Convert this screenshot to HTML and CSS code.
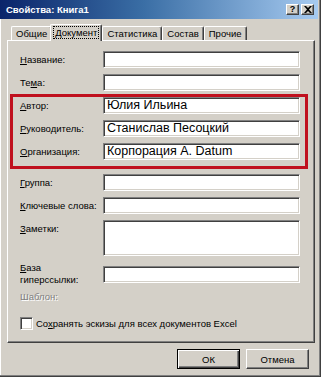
FILE: index.html
```html
<!DOCTYPE html>
<html lang="ru">
<head>
<meta charset="utf-8">
<title>Свойства: Книга1</title>
<link rel="stylesheet" href="styles.css">
</head>
<body>
<div class="window">
  <div class="titlebar">
    <span class="title">Свойства: Книга1</span>
    <div class="tbtns">
      <span class="tbtn">?</span>
      <span class="tbtn"><svg width="8" height="7" viewBox="0 0 8 7"><path d="M0 0h2l2 2 2-2h2L5 3.5 8 7H6L4 5 2 7H0l3-3.5z" fill="#000"/></svg></span>
    </div>
  </div>
  <div class="body">
    <div class="tabs">
      <div class="tab">Общие</div>
      <div class="tab active"><span class="focus">Документ</span></div>
      <div class="tab">Статистика</div>
      <div class="tab">Состав</div>
      <div class="tab">Прочие</div>
    </div>
    <div class="panel">
      <div class="row r1"><span class="lbl"><u>Н</u>азвание:</span><div class="field"></div></div>
      <div class="row"><span class="lbl">Те<u>м</u>а:</span><div class="field"></div></div>
      <div class="row"><span class="lbl"><u>А</u>втор:</span><div class="field">Юлия Ильина</div></div>
      <div class="row"><span class="lbl"><u>Р</u>уководитель:</span><div class="field">Станислав Песоцкий</div></div>
      <div class="row"><span class="lbl"><u>О</u>рганизация:</span><div class="field">Корпорация А. Datum</div></div>
      <div class="row r6"><span class="lbl"><u>Г</u>руппа:</span><div class="field"></div></div>
      <div class="row"><span class="lbl"><u>К</u>лючевые слова:</span><div class="field"></div></div>
      <div class="row tall"><span class="lbl"><u>З</u>аметки:</span><div class="field"></div></div>
      <div class="row two"><span class="lbl"><u>Б</u>аза<br>гиперссылки:</span><div class="field"></div></div>
      <div class="row disabled"><span class="lbl">Шаблон:</span></div>
      <div class="check"><span class="box"></span><span>Со<u>х</u>ранять эскизы для всех документов Excel</span></div>
      <div class="highlight"></div>
    </div>
    <div class="buttons">
      <div class="btn default"><span>ОК</span></div>
      <div class="btn"><span>Отмена</span></div>
    </div>
  </div>
</div>
</body>
</html>
```
FILE: styles.css
```css
* { box-sizing: border-box; }
html, body { margin: 0; padding: 0; }
body {
  width: 321px;
  height: 377px;
  background: #d4d0c8;
  font-family: "Liberation Sans", Arial, sans-serif;
  font-size: 9.5px;
  color: #000;
  overflow: hidden;
}
.window {
  width: 321px;
  height: 377px;
  background: #d4d0c8;
  border-right: 1px solid #404040;
  border-bottom: 1px solid #404040;
  box-shadow: inset -1px -1px 0 #808080, inset 1px 0 0 #fff;
  position: relative;
}
.titlebar {
  height: 19px;
  width: 318px;
  background: linear-gradient(to right, #0a246a 0%, #3a6ea5 45%, #a6caf0 100%);
  display: flex;
  align-items: center;
  justify-content: space-between;
  padding: 0 4px 0 6px;
}
.title {
  color: #fff;
  font-weight: bold;
  font-size: 9.5px;
}
.tbtns { display: flex; gap: 2px; }
.tbtn {
  width: 13px;
  height: 11px;
  background: #d4d0c8;
  border-top: 1px solid #fff;
  border-left: 1px solid #fff;
  border-right: 1px solid #404040;
  border-bottom: 1px solid #404040;
  box-shadow: inset -1px -1px 0 #808080;
  display: flex;
  align-items: center;
  justify-content: center;
  font-weight: bold;
  font-size: 9px;
  line-height: 1;
}
.body { padding: 5px 6px 0 7px; }
.tabs {
  display: flex;
  align-items: flex-end;
  height: 16px;
  padding-left: 4px;
  position: relative;
  z-index: 2;
}
.tab {
  height: 14px;
  padding: 0 4px;
  display: flex;
  align-items: center;
  border-top: 1px solid #fff;
  border-left: 1px solid #fff;
  border-right: 1px solid #404040;
  box-shadow: inset -1px 0 0 #808080;
  border-radius: 2px 2px 0 0;
  background: #d4d0c8;
  white-space: nowrap;
  margin-bottom: 0;
}
.tab.active {
  height: 17px;
  margin: 0 -2px -1px;
  padding: 0 3px 1px;
  position: relative;
  z-index: 3;
}
.focus { outline: 1px dotted #000; outline-offset: 0; padding: 0 1px; line-height: 11px; }
.tab.active + .tab { margin-left: 2px; }
.panel {
  position: relative;
  width: 308px;
  height: 303px;
  border-top: 1px solid #fff;
  border-left: 1px solid #fff;
  border-right: 1px solid #404040;
  border-bottom: 1px solid #404040;
  box-shadow: inset -1px -1px 0 #808080;
  padding: 0 0 0 12px;
}
.row {
  display: flex;
  align-items: center;
  height: 17px;
  margin-top: 6px;
}
.row.r1 { margin-top: 10px; }
.row.r6 { margin-top: 14px; }
.row.tall { height: 36px; align-items: flex-start; }
.row.tall .lbl { margin-top: 3px; }
.row.two { height: 24px; align-items: flex-start; }
.row.two .lbl { line-height: 12px; }
.row.two .field { margin-top: 4px; }
.row.disabled { height: 12px; margin-top: 4px; color: #808080; text-shadow: 1px 1px 0 #fff; }
.lbl { width: 83px; flex: none; white-space: nowrap; }
.field {
  width: 197px;
  height: 100%;
  max-height: 100%;
  background: #fff;
  border-top: 1px solid #808080;
  border-left: 1px solid #808080;
  border-right: 1px solid #fff;
  border-bottom: 1px solid #fff;
  box-shadow: inset 1px 1px 0 #404040, inset -1px -1px 0 #d4d0c8;
  font-size: 12.5px;
  padding: 0 0 0 3px;
  line-height: 14px;
  white-space: nowrap;
}
.row.two .field { height: 17px; }
.check {
  display: flex;
  align-items: center;
  gap: 3px;
  margin-top: 15px;
  height: 13px;
}
.box {
  width: 13px;
  height: 13px;
  background: #fff;
  border-top: 1px solid #808080;
  border-left: 1px solid #808080;
  border-right: 1px solid #fff;
  border-bottom: 1px solid #fff;
  box-shadow: inset 1px 1px 0 #404040, inset -1px -1px 0 #d4d0c8;
}
.highlight {
  position: absolute;
  left: 2px;
  top: 53px;
  width: 298px;
  height: 75px;
  border: 3px solid #c0101e;
  pointer-events: none;
}
.buttons {
  display: flex;
  justify-content: flex-end;
  gap: 6px;
  margin-top: 6px;
  padding-right: 5px;
}
.btn {
  width: 63px;
  height: 20px;
  display: flex;
  align-items: center;
  justify-content: center;
  border-top: 1px solid #fff;
  border-left: 1px solid #fff;
  border-right: 1px solid #404040;
  border-bottom: 1px solid #404040;
  box-shadow: inset -1px -1px 0 #808080;
  font-size: 9.5px;
}
.btn.default {
  border: 1px solid #000;
  box-shadow: inset 1px 1px 0 #fff, inset -1px -1px 0 #404040, inset -2px -2px 0 #808080;
}
```
